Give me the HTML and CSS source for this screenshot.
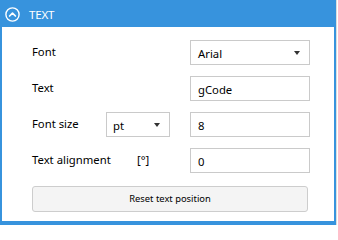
FILE: index.html
```html
<!DOCTYPE html>
<html>
<head>
<meta charset="utf-8">
<link rel="stylesheet" href="styles.css">
</head>
<body>
<div class="panel">
  <div class="header">
    <svg class="hicon" width="15" height="15" viewBox="0 0 15 15">
      <circle cx="7.5" cy="7.5" r="6.6" fill="none" stroke="#fff" stroke-width="1.4"/>
      <path d="M4.6 9 L7.5 6.1 L10.4 9" fill="none" stroke="#fff" stroke-width="1.7" stroke-linecap="round" stroke-linejoin="round"/>
    </svg>
    <span class="htitle">TEXT</span>
  </div>
  <div class="body">
    <div class="grid">
      <div class="label span2">Font</div>
      <div class="field select"><span>Arial</span><i class="arrow"></i></div>

      <div class="label span2">Text</div>
      <div class="field"><span>gCode</span></div>

      <div class="label">Font size</div>
      <div class="unitsel select"><span>pt</span><i class="arrow"></i></div>
      <div class="field"><span>8</span></div>

      <div class="label">Text alignment</div>
      <div class="unit">[°]</div>
      <div class="field"><span>0</span></div>
    </div>
    <div class="button">Reset text position</div>
  </div>
</div>
</body>
</html>
```
FILE: styles.css
```css
html, body {
  margin: 0;
  padding: 0;
  background: #fff;
}
body {
  font-family: "Noto Sans", "Open Sans", sans-serif;
  font-size: 11.3px;
  color: #000;
}
.panel {
  width: 336px;
  box-shadow: 1px 0 0 #dcdcdc;
}
.header {
  height: 27px;
  background: #3793dd;
  display: flex;
  align-items: center;
  padding-left: 5px;
  box-sizing: border-box;
}
.hicon {
  display: block;
  margin-top: 2px;
}
.htitle {
  color: #fff;
  font-size: 11.6px;
  margin-left: 9px;
  margin-top: 1px;
  letter-spacing: -0.2px;
}
.body {
  border-left: 2px solid #3793dd;
  border-right: 2px solid #3793dd;
  border-bottom: 4px solid #3793dd;
  padding: 13px 24px 9px 30px;
}
.grid {
  display: grid;
  grid-template-columns: 74px 64px 20px 120px;
  grid-auto-rows: 25px;
  row-gap: 11px;
}
.label {
  grid-column: 1;
  display: flex;
  align-items: center;
  white-space: nowrap;
  padding-bottom: 2px;
}
.span2 {
  grid-column: 1 / 3;
}
.unit {
  grid-column: 2;
  display: flex;
  align-items: center;
  padding-left: 31px;
  padding-bottom: 2px;
}
.field {
  grid-column: 4;
  border: 1px solid #cacaca;
  display: flex;
  align-items: center;
  padding: 1px 6px 0 7px;
  position: relative;
}
.unitsel {
  grid-column: 2;
  border: 1px solid #cacaca;
  display: flex;
  align-items: center;
  padding: 2px 6px 0 6px;
  position: relative;
}
.arrow {
  position: absolute;
  right: 9px;
  top: 10px;
  width: 0;
  height: 0;
  border-left: 3.5px solid transparent;
  border-right: 3.5px solid transparent;
  border-top: 4px solid #333;
}
.button {
  margin-top: 13px;
  width: 276px;
  height: 26px;
  box-sizing: border-box;
  border: 1px solid #cdcdcd;
  border-radius: 3px;
  background: #f4f4f4;
  display: flex;
  align-items: center;
  justify-content: center;
  font-size: 9.4px;
  padding-bottom: 1px;
}
```
